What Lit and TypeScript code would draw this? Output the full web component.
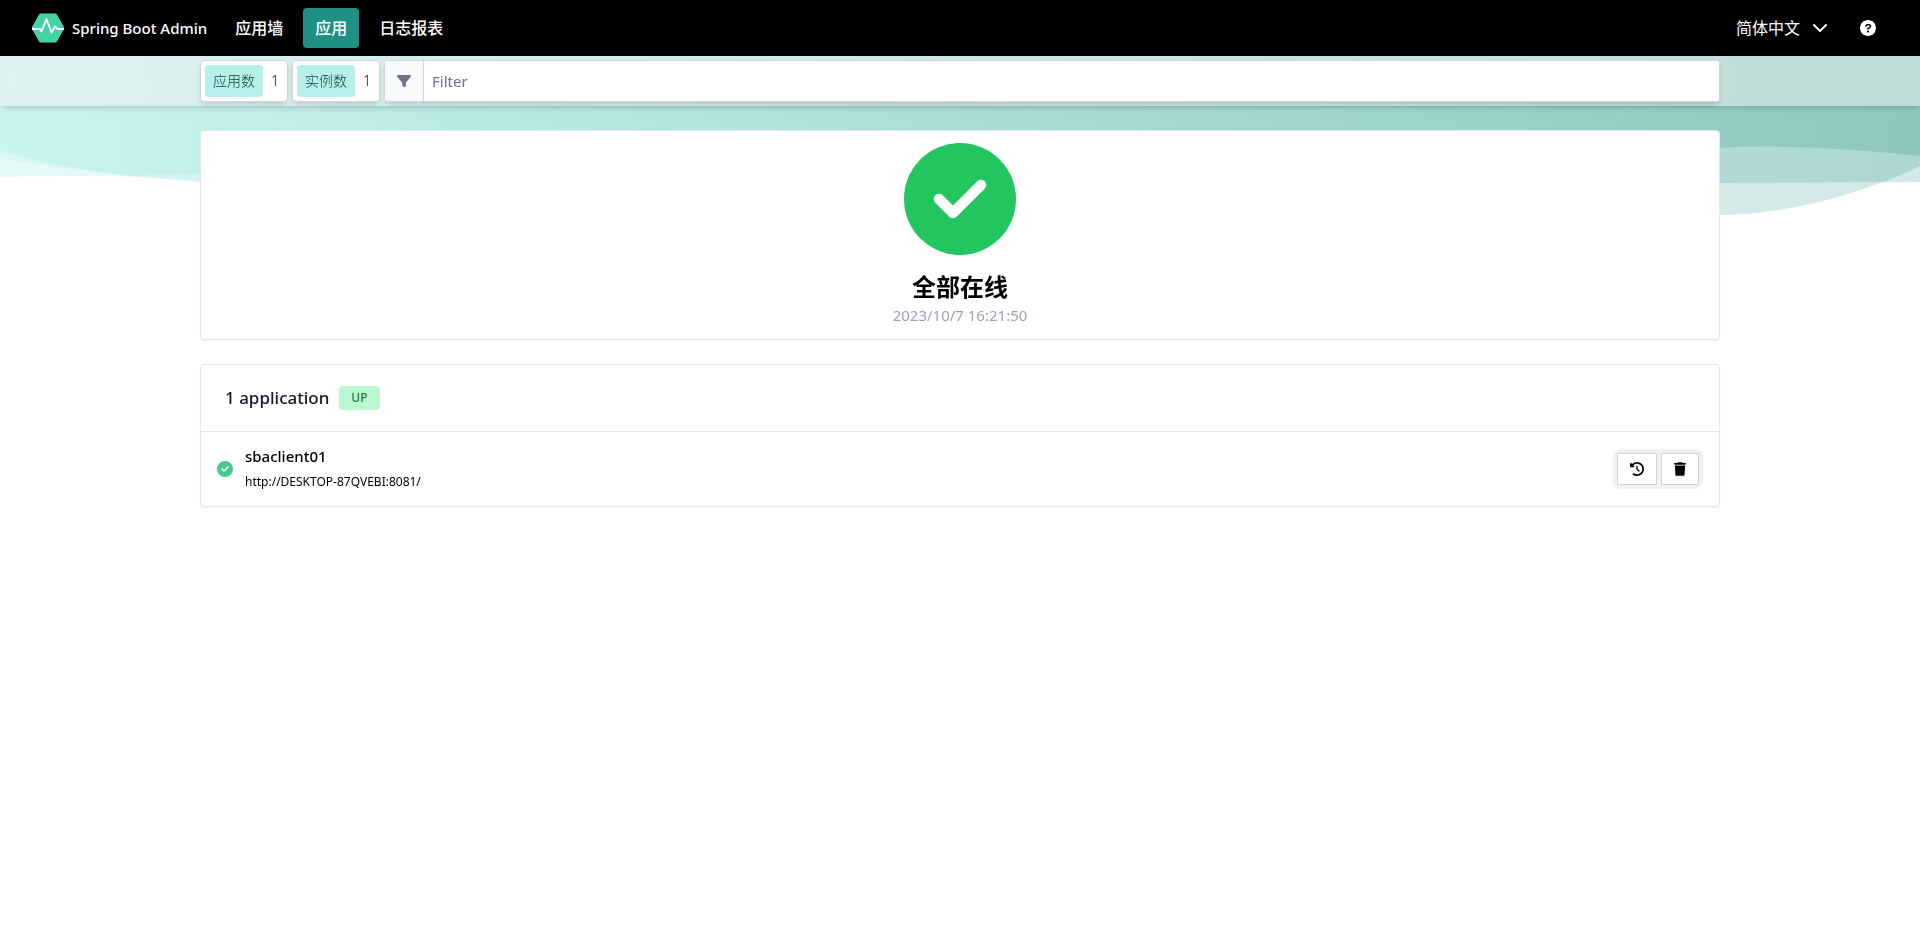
import { LitElement, html, css, svg } from "lit";
import { customElement, state } from "lit/decorators.js";

const icons = {
  check: "M256 512A256 256 0 1 0 256 0a256 256 0 1 0 0 512zM369 209L241 337c-9.4 9.4-24.6 9.4-33.900 0l-64-64c-9.400-9.400-9.400-24.600 0-33.900s24.600-9.400 33.900 0l47 47L335 175c9.400-9.400 24.600-9.400 33.900 0s9.400 24.600 0 33.900z",
  filter: "M3.853 54.87C10.47 40.9 24.54 32 40 32H472C487.5 32 501.5 40.9 508.1 54.87C514.8 68.84 512.7 85.37 502.1 97.33L320 320.9V448C320 460.1 313.2 471.2 302.3 476.6C291.5 482 278.5 480.9 268.8 473.6L204.8 425.6C196.7 419.6 192 410.1 192 400V320.9L9.042 97.33C-.745 85.37-2.765 68.84 3.854 54.87z",
  history: "M75 75L41 41C25.9 25.9 0 36.6 0 57.9V168c0 13.3 10.7 24 24 24H134.1c21.4 0 32.1-25.9 17-41l-30.8-30.8C155 85.5 203 64 256 64c106 0 192 86 192 192s-86 192-192 192c-40.8 0-78.6-12.7-109.7-34.4c-14.5-10.1-34.4-6.6-44.6 7.9s-6.6 34.4 7.9 44.6C151.2 495 201.7 512 256 512c141.4 0 256-114.6 256-256S397.4 0 256 0C185.3 0 121.3 28.7 75 75zm181 53c-13.3 0-24 10.7-24 24V256c0 6.4 2.5 12.5 7 17l72 72c9.4 9.4 24.6 9.4 33.9 0s9.4-24.6 0-33.9l-65-65V152c0-13.3-10.7-24-24-24z",
  trash: "M135.2 17.7L128 32H32C14.3 32 0 46.3 0 64S14.3 96 32 96H416c17.7 0 32-14.3 32-32s-14.3-32-32-32H320l-7.2-14.3C307.4 6.8 296.3 0 284.2 0H163.8c-12.1 0-23.2 6.8-28.6 17.7zM416 128H32L53.2 467c1.6 25.3 22.6 45 47.9 45H346.9c25.3 0 46.3-19.7 47.9-45L416 128z",
  help: "M256 0C114.6 0 0 114.6 0 256s114.6 256 256 256s256-114.6 256-256S397.4 0 256 0zM256 400c-18 0-32-14-32-32s13.1-32 32-32c17.1 0 32 14 32 32S273.1 400 256 400zM325.1 258L280 286V288c0 13-11 24-24 24S232 301 232 288V272c0-8 4-16 12-21l57-34C308 213 312 206 312 198C312 186 301.1 176 289.1 176h-51.1C225.1 176 216 186 216 198c0 13-11 24-24 24s-24-11-24-24C168 159 199 128 237.1 128h51.1C329 128 360 159 360 198C360 222 347 245 325.1 258z",
};

const icon = (name: keyof typeof icons, cls: string, box = "0 0 512 512") =>
  html`<svg class="icon ${cls}" viewBox=${box} aria-hidden="true">${svg`<path fill="currentColor" d=${icons[name]} />`}</svg>`;

@customElement("app-root")
export class AppRoot extends LitElement {
  @state() private query = "";

  private stats = [
    { label: "应用数", value: 1 },
    { label: "实例数", value: 1 },
  ];

  private apps = [{ name: "sbaclient01", url: "http://DESKTOP-87QVEBI:8081/" }];

  static styles = css`
    :host {
      display: block;
      position: relative;
      min-height: 100vh;
      background: #fff;
      color: #000;
      font: 15px/24px "Noto Sans", "Noto Sans CJK SC", sans-serif;
    }
    * { box-sizing: border-box; }
    .icon { display: block; flex: none; }
    a { color: inherit; text-decoration: none; }
    button { font: inherit; color: inherit; background: none; border: 0; padding: 0; margin: 0; cursor: pointer; }

    .nav {
      position: relative;
      display: flex;
      align-items: center;
      justify-content: space-between;
      height: 56px;
      padding: 0 32px;
      background: #000;
      color: #fff;
      font-weight: 500;
    }
    .group { display: flex; align-items: center; gap: 8px; }
    .brand { display: flex; align-items: center; gap: 8px; margin-right: 8px; }
    .logo { width: 32px; height: 32px; }
    .link { padding: 8px 12px; border-radius: 4px; font-size: 16px; }
    .active { background: #1e9084; }
    .lang { display: flex; align-items: center; gap: 12px; padding: 8px 12px; font-size: 16px; font-weight: 400; }
    .chevron { width: 16px; height: 16px; }
    .help { padding: 12px; }
    .s16 { width: 16px; height: 16px; }

    .waves {
      position: absolute;
      top: 0;
      left: 0;
      width: 100%;
      height: 220px;
    }
    .bar {
      position: relative;
      padding: 4px 0;
      background: rgba(240, 240, 236, 0.5);
      backdrop-filter: blur(10px);
      box-shadow: 0 4px 6px -1px rgba(0, 0, 0, 0.1), 0 2px 4px -2px rgba(0, 0, 0, 0.1);
    }
    .container { width: 100%; max-width: 1536px; margin: 0 auto; padding: 0 8px; }
    .tools { display: flex; gap: 4px; }
    .stat, .search {
      display: flex;
      height: 42px;
      border: 1px solid #d1d5db;
      border-radius: 4px;
      background: #fff;
      box-shadow: 0 4px 6px -1px rgba(0, 0, 0, 0.1), 0 2px 4px -2px rgba(0, 0, 0, 0.1);
    }
    .stat { align-items: center; gap: 8px; padding: 0 8px 0 4px; font-size: 14px; line-height: 20px; font-weight: 300; color: #111; }
    .chip { padding: 6px 8px; border-radius: 4px; background: #b7f0ea; color: #0f3b36; }
    .search { flex: 1; overflow: hidden; }
    .search label { display: flex; align-items: center; padding: 0 12px; background: #f9fafb; border-right: 1px solid #d1d5db; color: #6b7280; }
    .search .icon { width: 14px; height: 14px; }
    .search input { flex: 1; min-width: 0; border: 0; outline: 0; padding: 0 8px; background: #fff; color: #374151; font: inherit; }
    .search input::placeholder { color: #6b7280; opacity: 1; }

    .main { position: relative; display: flex; flex-direction: column; gap: 24px; padding-top: 24px; padding-bottom: 24px; }
    .card {
      border: 1px solid #e5e7eb;
      border-radius: 4px;
      background: #fff;
      box-shadow: 0 1px 2px rgba(0, 0, 0, 0.05);
    }
    .summary { display: flex; flex-direction: column; align-items: center; padding: 12px; }
    .big { width: 112px; height: 112px; color: #22c55e; }
    h1 { margin: 16px 0 0; font-size: 24px; line-height: 32px; font-weight: 700; }
    .date { color: #9ca3af; }
    .head { display: flex; align-items: center; gap: 10px; padding: 20px 24px; border-bottom: 1px solid #e5e7eb; }
    h2 { margin: 0; font-size: 17px; line-height: 26px; font-weight: 500; color: #111827; }
    .badge { padding: 0 12px; border-radius: 4px; background: #bbf7d0; color: #15803d; font-size: 12px; line-height: 24px; font-weight: 500; }
    .row { display: flex; align-items: center; gap: 12px; padding: 12px 16px; }
    .ok { color: #48c78e; }
    .info { flex: 1; display: flex; flex-direction: column; gap: 2px; }
    .name { font-weight: 500; }
    .url { font-size: 12px; }
    .actions { display: flex; gap: 4px; padding: 4px; border-radius: 8px; background: #f1f1f2; }
    .actions button { padding: 8px 12px; border: 1px solid #d1d5db; background: #fff; }
    .s14 { width: 14px; height: 14px; }
    .bin { width: 12px; height: 14px; }
  `;

  render() {
    const shown = this.apps.filter((a) => a.name.includes(this.query));
    return html`
      <svg class="waves" viewBox="0 0 1920 220" preserveAspectRatio="none" aria-hidden="true">
        <defs>
          <linearGradient id="sea" x1="0" x2="1">
            <stop offset="0" stop-color="#c9f5f1" />
            <stop offset="1" stop-color="#8dc7c0" />
          </linearGradient>
          <linearGradient id="mist" x1="0" x2="1">
            <stop offset="0" stop-color="#e8faf8" />
            <stop offset="1" stop-color="#d2e9e6" />
          </linearGradient>
          <linearGradient id="shoal" x1="0" x2="1">
            <stop offset="0" stop-color="#d9f7f4" />
            <stop offset="1" stop-color="#add7d2" />
          </linearGradient>
        </defs>
        <path fill="url(#mist)" d="M0 0H1920V182Q1800 182 1720 183C1000 300 500 164 0 177Z" />
        <path fill="url(#mist)" d="M0 0H1920V166Q1820 213 1720 215C1200 215 600 220 130 176L0 150Z" />
        <path fill="url(#shoal)" d="M0 0H1920V166Q1900 176 1883 182L1720 183C1200 190 600 190 200 181Q90 174 0 158Z" />
        <path fill="url(#sea)" d="M0 0H1920V156Q1800 143 1720 148C1300 170 700 160 200 173L130 176Q60 168 0 151Z" />
      </svg>
      <nav class="nav">
        <div class="group">
          <a class="brand" href="#">
            <svg class="logo" viewBox="0 0 32 32" aria-hidden="true">
              <path fill="#42d3a5" d="M9 1.5H23Q24.400 1.500 25 2.600L31.700 14.500Q32.400 16 31.700 17.500L25 29.400Q24.400 30.500 23 30.500H9Q7.600 30.500 7 29.400L.3 17.500Q-.4 16 .3 14.500L7 2.600Q7.600 1.500 9 1.500Z" />
              <path fill="none" stroke="#fff" stroke-width="1.800" stroke-linejoin="round" d="M0 17H8L9.500 19.500L14.500 7L19.500 20.500L23 14.500L25.500 17H32" />
            </svg>
            <span>Spring Boot Admin</span>
          </a>
          <a class="link" href="#wallboard">应用墙</a>
          <a class="link active" href="#applications">应用</a>
          <a class="link" href="#journal">日志报表</a>
        </div>
        <div class="group">
          <button class="lang">
            简体中文
            <svg class="icon chevron" viewBox="0 0 16 16" aria-hidden="true"><path d="M2 5l6 6 6-6" fill="none" stroke="#fff" stroke-width="2" stroke-linecap="round" stroke-linejoin="round" /></svg>
          </button>
          <a class="help" href="#about" aria-label="Help">${icon("help", "s16")}</a>
        </div>
      </nav>
      <div class="bar">
        <div class="container tools">
          ${this.stats.map((s) => html`<div class="stat"><span class="chip">${s.label}</span><span>${s.value}</span></div>`)}
          <div class="search">
            <label for="filter" aria-label="Filter">${icon("filter", "")}</label>
            <input id="filter" type="search" placeholder="Filter" .value=${this.query}
              @input=${(e: Event) => (this.query = (e.target as HTMLInputElement).value)} />
          </div>
        </div>
      </div>
      <main class="container main">
        <section class="card summary">
          ${icon("check", "big")}
          <h1>全部在线</h1>
          <time class="date">2023/10/7 16:21:50</time>
        </section>
        <section class="card">
          <header class="head"><h2>1 application</h2><span class="badge">UP</span></header>
          ${shown.map((a) => html`
            <div class="row">
              ${icon("check", "s16 ok")}
              <div class="info"><span class="name">${a.name}</span><a class="url" href=${a.url}>${a.url}</a></div>
              <div class="actions">
                <button aria-label="Journal">${icon("history", "s14")}</button>
                <button aria-label="Remove">${icon("trash", "bin", "0 0 448 512")}</button>
              </div>
            </div>`)}
        </section>
      </main>
    `;
  }
}
